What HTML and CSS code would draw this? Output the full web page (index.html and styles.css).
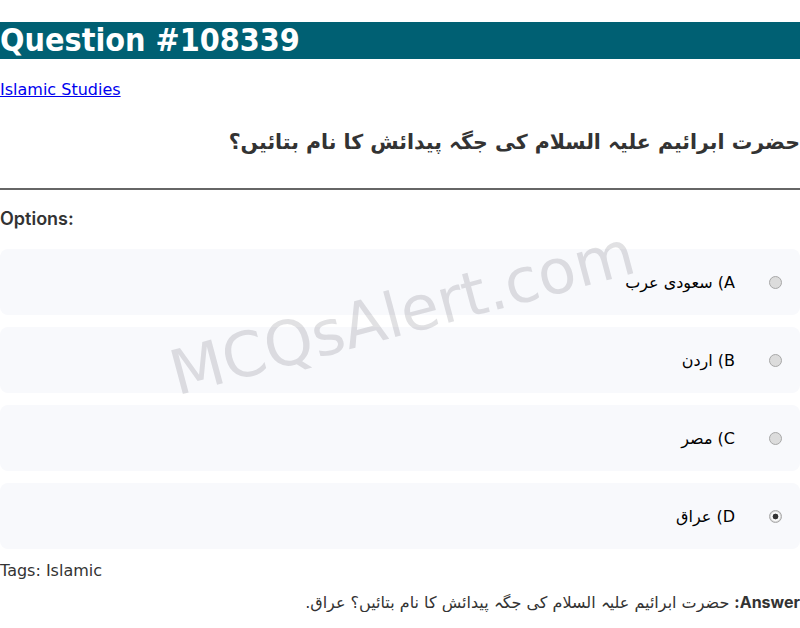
FILE: index.html
```html
<!DOCTYPE html>
<html lang="en">
<head>
<meta charset="utf-8">
<title>Question #108339</title>
<link rel="stylesheet" href="styles.css">
</head>
<body>
<h1 class="title">Question #108339</h1>
<p class="cat"><a href="#">Islamic Studies</a></p>
<h2 class="question" dir="rtl">حضرت ابرائیم علیہ السلام کی جگہ پیدائش کا نام بتائیں؟</h2>
<hr class="rule">
<h3 class="opt-head">Options:</h3>
<div class="options">
  <div class="watermark">MCQsAlert.com</div>
  <label class="option" dir="rtl"><input class="radio" type="radio" name="q" disabled><span class="opt-text">A) سعودی عرب</span></label>
  <label class="option" dir="rtl"><input class="radio" type="radio" name="q" disabled><span class="opt-text">B) اردن</span></label>
  <label class="option" dir="rtl"><input class="radio" type="radio" name="q" disabled><span class="opt-text">C) مصر</span></label>
  <label class="option" dir="rtl"><input class="radio" type="radio" name="q" disabled checked><span class="opt-text">D) عراق</span></label>
</div>
<p class="tags">Tags: Islamic</p>
<p class="answer" dir="rtl"><strong class="answer-label">Answer:</strong> حضرت ابرائیم علیہ السلام کی جگہ پیدائش کا نام بتائیں؟ عراق.</p>
</body>
</html>
```
FILE: styles.css
```css
body {
  margin: 0;
  font-family: "DejaVu Sans", sans-serif;
  font-size: 16px;
  color: #333;
  background: #fff;
}
.title {
  margin: 22px 0 21px;
  font-family: "DejaVu Sans Condensed", "DejaVu Sans", sans-serif;
  font-stretch: condensed;
  font-size: 32px;
  font-weight: bold;
  line-height: 37px;
  color: #fff;
  background: #006073;
}
.cat {
  margin: 0;
}
.cat a {
  color: #0000ee;
}
.question {
  margin: 31px 0 34px;
  font-size: 20.5px;
  font-weight: bold;
  color: #333;
  text-align: right;
}
.rule {
  margin: 0;
  border: 0;
  border-top: 2px solid #666;
}
.opt-head {
  margin: 18px 0 20px;
  font-family: Inter, "DejaVu Sans", sans-serif;
  font-size: 18px;
  font-weight: 600;
  color: #333;
}
.options {
  position: relative;
  display: flex;
  flex-direction: column;
  gap: 12px;
}
.option {
  display: flex;
  align-items: center;
  gap: 34px;
  height: 66px;
  padding: 0 18px;
  border-radius: 8px;
  background: #f8f9fc;
  color: #000;
  font-size: 16px;
}
.radio {
  appearance: none;
  -webkit-appearance: none;
  box-sizing: border-box;
  margin: 0;
  width: 13px;
  height: 13px;
  border-radius: 50%;
  border: 1px solid #a8a8a8;
  background: #dcdcdc;
}
.radio:checked {
  background: radial-gradient(circle, #333 0 2.6px, #fafafa 3.2px 4.2px, #dcdcdc 4.8px);
}
.watermark {
  position: absolute;
  left: 402px;
  top: 64px;
  font-size: 62px;
  font-weight: normal;
  color: rgba(40, 45, 60, 0.14);
  transform: translate(-50%, -50%) rotate(-15deg);
  pointer-events: none;
  white-space: nowrap;
}
.tags {
  margin: 12px 0 0;
  color: #333;
}
.answer {
  margin: 12px 0 0;
  color: #333;
}
.answer-label {
  font-family: Inter, "DejaVu Sans", sans-serif;
  font-weight: 700;
}
```
